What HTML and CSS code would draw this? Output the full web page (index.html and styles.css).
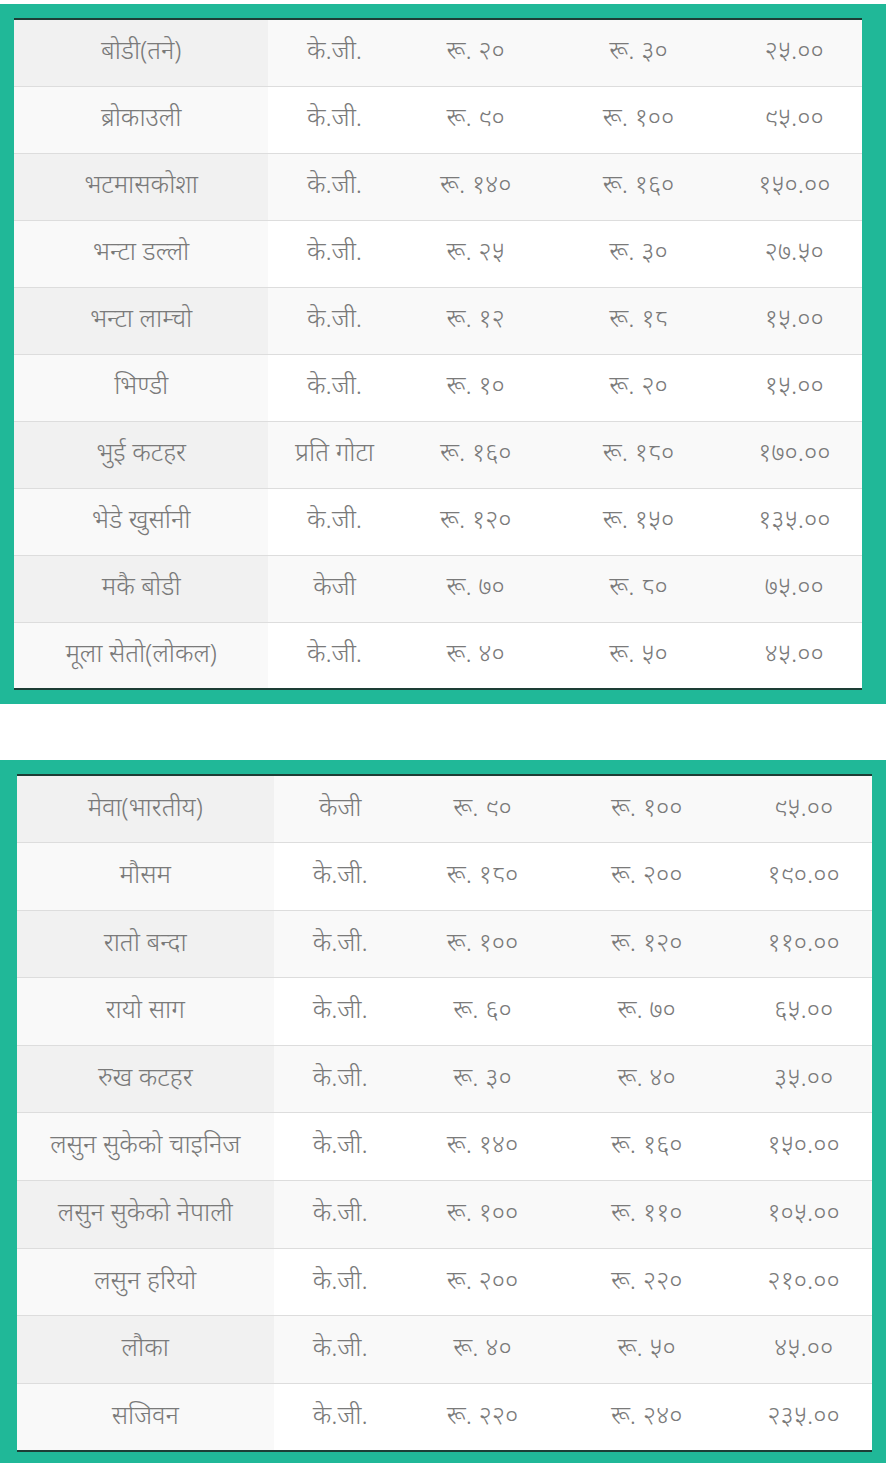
FILE: index.html
```html
<!DOCTYPE html>
<html lang="ne">
<head>
<meta charset="utf-8">
<link rel="stylesheet" href="styles.css">
</head>
<body>
<section class="panel panel-a">
<table class="prices">
<tbody>
<tr><td>बोडी(तने)</td><td>के.जी.</td><td>रू. २०</td><td>रू. ३०</td><td>२५.००</td></tr>
<tr><td>ब्रोकाउली</td><td>के.जी.</td><td>रू. ९०</td><td>रू. १००</td><td>९५.००</td></tr>
<tr><td>भटमासकोशा</td><td>के.जी.</td><td>रू. १४०</td><td>रू. १६०</td><td>१५०.००</td></tr>
<tr><td>भन्टा डल्लो</td><td>के.जी.</td><td>रू. २५</td><td>रू. ३०</td><td>२७.५०</td></tr>
<tr><td>भन्टा लाम्चो</td><td>के.जी.</td><td>रू. १२</td><td>रू. १८</td><td>१५.००</td></tr>
<tr><td>भिण्डी</td><td>के.जी.</td><td>रू. १०</td><td>रू. २०</td><td>१५.००</td></tr>
<tr><td>भुई कटहर</td><td>प्रति गोटा</td><td>रू. १६०</td><td>रू. १८०</td><td>१७०.००</td></tr>
<tr><td>भेडे खुर्सानी</td><td>के.जी.</td><td>रू. १२०</td><td>रू. १५०</td><td>१३५.००</td></tr>
<tr><td>मकै बोडी</td><td>केजी</td><td>रू. ७०</td><td>रू. ८०</td><td>७५.००</td></tr>
<tr><td>मूला सेतो(लोकल)</td><td>के.जी.</td><td>रू. ४०</td><td>रू. ५०</td><td>४५.००</td></tr>
</tbody>
</table>
</section>
<section class="panel panel-b">
<table class="prices">
<tbody>
<tr><td>मेवा(भारतीय)</td><td>केजी</td><td>रू. ९०</td><td>रू. १००</td><td>९५.००</td></tr>
<tr><td>मौसम</td><td>के.जी.</td><td>रू. १८०</td><td>रू. २००</td><td>१९०.००</td></tr>
<tr><td>रातो बन्दा</td><td>के.जी.</td><td>रू. १००</td><td>रू. १२०</td><td>११०.००</td></tr>
<tr><td>रायो साग</td><td>के.जी.</td><td>रू. ६०</td><td>रू. ७०</td><td>६५.००</td></tr>
<tr><td>रुख कटहर</td><td>के.जी.</td><td>रू. ३०</td><td>रू. ४०</td><td>३५.००</td></tr>
<tr><td>लसुन सुकेको चाइनिज</td><td>के.जी.</td><td>रू. १४०</td><td>रू. १६०</td><td>१५०.००</td></tr>
<tr><td>लसुन सुकेको नेपाली</td><td>के.जी.</td><td>रू. १००</td><td>रू. ११०</td><td>१०५.००</td></tr>
<tr><td>लसुन हरियो</td><td>के.जी.</td><td>रू. २००</td><td>रू. २२०</td><td>२१०.००</td></tr>
<tr><td>लौका</td><td>के.जी.</td><td>रू. ४०</td><td>रू. ५०</td><td>४५.००</td></tr>
<tr><td>सजिवन</td><td>के.जी.</td><td>रू. २२०</td><td>रू. २४०</td><td>२३५.००</td></tr>
</tbody>
</table>
</section>
</body>
</html>
```
FILE: styles.css
```css
html, body {
  margin: 0;
  padding: 0;
  background: #ffffff;
}
body {
  padding-top: 4px;
  font-family: "Noto Sans", "Open Sans", sans-serif;
  color: #7a7a7a;
}
.panel {
  background: #20b898;
}
.panel-a {
  padding: 14px 24px 14px 14px;
}
.panel-b {
  margin-top: 56px;
  padding: 14px 14px 12px 17px;
}
.prices {
  width: 100%;
  border-collapse: collapse;
  background: #ffffff;
  border-top: 2px solid #1d3d35;
  border-bottom: 2px solid #1d3d35;
  table-layout: fixed;
}
.prices td {
  box-sizing: border-box;
  text-align: center;
  font-size: 25.5px;
  font-weight: 300;
  line-height: 1.2;
  border-top: 1px solid #dddddd;
  padding: 0 2px 6px;
  white-space: nowrap;
}
.prices tr:first-child td {
  border-top: none;
}
.panel-a .prices tr {
  height: 67px;
}
.panel-b .prices tr {
  height: 67.6px;
}
.prices td:nth-child(1) { width: 30%; background: #f9f9f9; }
.prices td:nth-child(2) { width: 15.6%; }
.prices td:nth-child(3) { width: 17.7%; }
.prices td:nth-child(4) { width: 20.7%; }
.prices td:nth-child(5) { width: 16%; }
.prices tr:nth-child(odd) td { background: #f9f9f9; }
.prices tr:nth-child(odd) td:nth-child(1) { background: #f1f1f1; }
```
